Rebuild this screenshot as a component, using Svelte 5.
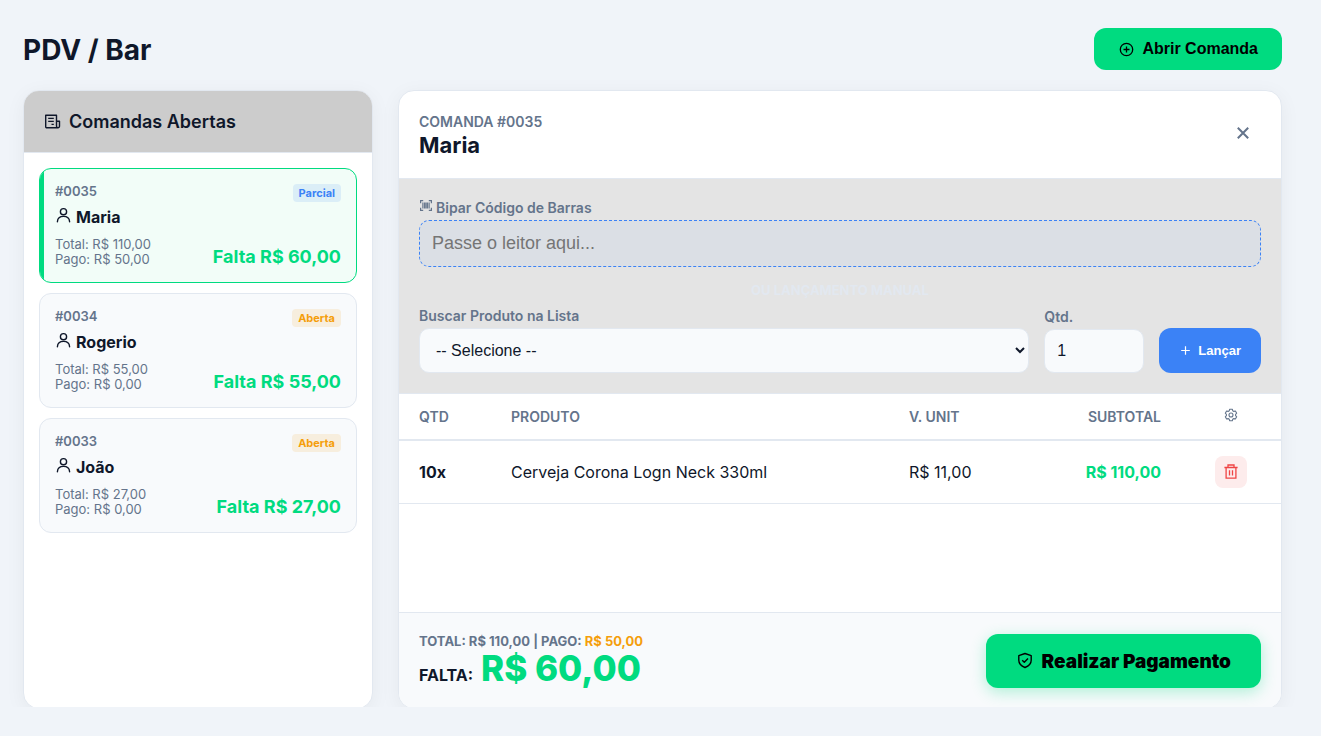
<script lang="ts">
    type Tab = {
        id: string;
        customer: string;
        status: "Parcial" | "Aberta";
        total: string;
        paid: string;
        due: string;
    };

    const tabs: Tab[] = [
        { id: "0035", customer: "Maria", status: "Parcial", total: "110,00", paid: "50,00", due: "60,00" },
        { id: "0034", customer: "Rogerio", status: "Aberta", total: "55,00", paid: "0,00", due: "55,00" },
        { id: "0033", customer: "João", status: "Aberta", total: "27,00", paid: "0,00", due: "27,00" },
    ];

    const items = [
        { qty: 10, product: "Cerveja Corona Logn Neck 330ml", price: "11,00", subtotal: "110,00" },
    ];

    let selectedId = $state("0035");
    let barcode = $state("");
    let product = $state("");
    let quantity = $state(1);

    let selected = $derived(tabs.find((t) => t.id === selectedId) ?? tabs[0]);
</script>

<div class="page">
    <header class="topbar">
        <h1>PDV / Bar</h1>
        <button class="btn btn-open" type="button">
            <svg width="16" height="16" viewBox="0 0 16 16" fill="none" stroke="currentColor" stroke-width="1.3" aria-hidden="true">
                <circle cx="8.500" cy="8.500" r="6.2" />
                <path d="M8.500 5.500v6M5.500 8.500h6" />
            </svg>
            Abrir Comanda
        </button>
    </header>

    <main class="workspace">
        <section class="panel">
            <h2 class="list-title">
                <svg width="17" height="17" viewBox="0 0 17 17" fill="none" stroke="currentColor" stroke-width="1.4" stroke-linejoin="round" aria-hidden="true">
                    <path d="M12.5 14.700H2.700a1 1 0 0 1-1-1V2.200h10.800v11a1.500 1.500 0 0 0 3 0V8.200h-3M12.500 14.700h1.500" />
                    <path d="M4.200 5.400h5.600M4.200 8.400h5.600M7.500 11.400h2.300" />
                </svg>
                Comandas Abertas
            </h2>

            <div class="tab-list">
                {#each tabs as tab (tab.id)}
                    <button
                        type="button"
                        class="tab"
                        class:active={tab.id === selectedId}
                        onclick={() => (selectedId = tab.id)}
                    >
                        <span class="tab-row">
                            <span class="tab-who">
                                <span class="tab-id">#{tab.id}</span>
                                <span class="tab-name">
                                    <svg width="17" height="17" viewBox="0 0 17 17" fill="none" stroke="currentColor" stroke-width="1.4" stroke-linecap="round" aria-hidden="true">
                                        <circle cx="8.5" cy="4.7" r="3.1" />
                                        <path d="M2.4 14.700c.2-3.4 2.8-5.300 6.1-5.300s5.900 1.900 6.100 5.300" />
                                    </svg>
                                    {tab.customer}
                                </span>
                            </span>
                            <span class="badge" class:partial={tab.status === "Parcial"}>{tab.status}</span>
                        </span>
                        <span class="tab-row tab-values">
                            <span class="tab-sums">Total: R$ {tab.total}<br />Pago: R$ {tab.paid}</span>
                            <strong class="tab-due">Falta R$ {tab.due}</strong>
                        </span>
                    </button>
                {/each}
            </div>
        </section>

        <section class="panel">
            <div class="detail-head">
                <div>
                    <div class="detail-id">COMANDA #{selected.id}</div>
                    <h2 class="detail-name">{selected.customer}</h2>
                </div>
                <button class="close" type="button" aria-label="Fechar">
                    <svg width="16" height="16" viewBox="0 0 16 16" fill="none" stroke="currentColor" stroke-width="2" aria-hidden="true">
                        <path d="M2.800 2.800l10.400 10.400M13.200 2.800l-10.400 10.400" />
                    </svg>
                </button>
            </div>

            <form class="entry" onsubmit={(e) => e.preventDefault()}>
                <label for="barcode">
                    <svg width="14" height="14" viewBox="0 0 14 14" fill="none" stroke="currentColor" stroke-width="1.200" aria-hidden="true">
                        <path d="M4.200 1.600H1.600v2.600M9.800 1.600h2.600v2.600M4.200 11.400H1.600V8.800M9.800 11.400h2.600V8.800" />
                        <path d="M3.900 3.500v6M10.100 3.500v6" />
                        <path d="M5.900 3.500v6M8.100 3.500v6" stroke-width="1.700" />
                    </svg>
                    Bipar Código de Barras
                </label>
                <input id="barcode" class="barcode" type="text" placeholder="Passe o leitor aqui..." bind:value={barcode} />

                <div class="divider">OU LANÇAMENTO MANUAL</div>

                <div class="manual">
                    <div class="field grow">
                        <label for="product">Buscar Produto na Lista</label>
                        <select id="product" bind:value={product}>
                            <option value="">-- Selecione --</option>
                            <option value="corona">Cerveja Corona Logn Neck 330ml</option>
                        </select>
                    </div>
                    <div class="field qty">
                        <label for="quantity">Qtd.</label>
                        <input id="quantity" type="number" min="1" bind:value={quantity} />
                    </div>
                    <button class="btn btn-add" type="submit">
                        <svg width="13" height="13" viewBox="0 0 13 13" fill="none" stroke="currentColor" stroke-width="1.200" aria-hidden="true">
                            <path d="M6.500 2.200v8.600M2.200 6.500h8.600" />
                        </svg>
                        Lançar
                    </button>
                </div>
            </form>

            <div class="items">
                <table>
                    <thead>
                        <tr>
                            <th class="col-qty">QTD</th>
                            <th>PRODUTO</th>
                            <th class="col-unit">V. UNIT</th>
                            <th class="col-sub">SUBTOTAL</th>
                            <th class="col-act" aria-label="Ações">
                                <svg width="14" height="14" viewBox="0 0 14 14" fill="none" stroke="currentColor" stroke-width="1.100" stroke-linejoin="round" aria-hidden="true">
                                    <path d="M5.700 1.200h2.600l.4 1.500 1.200.7 1.500-.4 1.300 2.200-1.100 1.100v1.400l1.100 1.100-1.300 2.200-1.500-.4-1.200.7-.4 1.500H5.700l-.4-1.500-1.200-.7-1.500.4-1.300-2.200 1.100-1.100V6.300L1.300 5.200 2.600 3l1.500.4 1.200-.7z" />
                                    <circle cx="7" cy="7" r="2" />
                                </svg>
                            </th>
                        </tr>
                    </thead>
                    <tbody>
                        {#each items as item}
                            <tr>
                                <td><strong>{item.qty}x</strong></td>
                                <td>{item.product}</td>
                                <td>R$ {item.price}</td>
                                <td class="col-sub subtotal">R$ {item.subtotal}</td>
                                <td class="col-act">
                                    <button class="remove" type="button" aria-label="Remover item">
                                        <svg width="16" height="16" viewBox="0 0 16 16" fill="none" stroke="currentColor" stroke-width="1.300" aria-hidden="true">
                                            <path d="M1.400 3.500h13.200M5 3.500V1h6v2.500M3.100 3.500v10.700h9.800V3.500M6.500 6.200v5.200M9.500 6.200v5.200" />
                                        </svg>
                                    </button>
                                </td>
                            </tr>
                        {/each}
                    </tbody>
                </table>
            </div>

            <footer class="summary">
                <div>
                    <div class="sums">TOTAL: R$ {selected.total} | PAGO: <span class="paid">R$ {selected.paid}</span></div>
                    <div class="due">FALTA: <strong>R$ {selected.due}</strong></div>
                </div>
                <button class="btn btn-pay" type="button">
                    <svg width="18" height="18" viewBox="0 0 18 18" fill="none" stroke="currentColor" stroke-width="1.400" stroke-linejoin="round" aria-hidden="true">
                        <path d="M9 1.500l6.200 2.200v4.500c0 3.300-2.300 5.700-6.200 7.300-3.900-1.600-6.200-4-6.200-7.300V3.700z" />
                        <path d="M6.200 8.200l2.100 2.100 3.700-3.700" />
                    </svg>
                    Realizar Pagamento
                </button>
            </footer>
        </section>
    </main>
</div>

<style>
    :global(body) {
        margin: 0;
        background: #f0f4f9;
    }

    .page {
        --green: #00db80;
        --blue: #3b82f6;
        --orange: #f59e0b;
        --ink: #0f172a;
        --muted: #64748b;
        --line: #e2e8f0;
        --soft: #f8fafc;

        box-sizing: border-box;
        height: calc(100vh - 29px);
        min-height: 600px;
        padding: 28px 39px 0 23px;
        overflow: clip;
        display: flex;
        flex-direction: column;
        gap: 20px;
        font-family: Inter, sans-serif;
        color: var(--ink);
    }

    .page *,
    .page *::before {
        box-sizing: border-box;
    }

    h1,
    h2 {
        margin: 0;
    }

    svg {
        flex: none;
    }

    .topbar {
        display: flex;
        align-items: flex-end;
        justify-content: space-between;
    }

    h1 {
        font-size: 28px;
        line-height: 40px;
        font-weight: 700;
    }

    .btn {
        display: flex;
        align-items: center;
        justify-content: center;
        gap: 8px;
        border: none;
        border-radius: 12px;
        font-family: "Liberation Sans", Arial, sans-serif;
        font-weight: 700;
        cursor: pointer;
    }

    .btn-open {
        height: 42px;
        padding: 0 24px;
        font-size: 16px;
        background: var(--green);
        color: #000;
    }

    /* Runs past the page's lower edge, which cuts off the panels' bottom border */
    .workspace {
        flex: 1;
        min-height: 0;
        margin-bottom: -2px;
        display: grid;
        grid-template-columns: 350px 1fr;
        gap: 25px;
    }

    .panel {
        min-height: 0;
        display: flex;
        flex-direction: column;
        overflow: hidden;
        background: #fff;
        border: 1px solid var(--line);
        border-radius: 16px;
        box-shadow: 0 4px 20px rgba(15, 23, 42, 0.05);
    }

    .list-title {
        display: flex;
        align-items: center;
        gap: 8px;
        padding: 20px;
        font-size: 18px;
        line-height: 21px;
        font-weight: 600;
        background: #ccc;
        border-bottom: 1px solid var(--line);
    }

    .tab-list {
        display: flex;
        flex-direction: column;
        gap: 10px;
        padding: 15px;
        overflow-y: auto;
    }

    .tab {
        position: relative;
        display: flex;
        flex-direction: column;
        gap: 10px;
        padding: 15px;
        overflow: hidden;
        font-family: inherit;
        color: inherit;
        text-align: left;
        background: var(--soft);
        border: 1px solid var(--line);
        border-radius: 12px;
        cursor: pointer;
    }

    .tab.active {
        background: #f2fdf8;
        border-color: var(--green);
    }

    /* Accent bar of the open tab */
    .tab.active::before {
        content: "";
        position: absolute;
        inset: 0 auto 0 0;
        width: 4px;
        background: var(--green);
    }

    .tab-row {
        display: flex;
        align-items: flex-start;
        justify-content: space-between;
    }

    .tab-values {
        align-items: flex-end;
    }

    .tab-who {
        display: flex;
        flex-direction: column;
        gap: 8px;
    }

    .tab-id {
        font-size: 13px;
        line-height: 15px;
        font-weight: 600;
        color: var(--muted);
    }

    .tab-name {
        display: flex;
        gap: 4px;
        font-size: 16px;
        line-height: 20px;
        font-weight: 700;
    }

    .badge {
        padding: 2px 6px;
        border-radius: 4px;
        font-size: 11px;
        line-height: 14px;
        font-weight: 700;
        color: var(--orange);
        background: rgba(245, 158, 11, 0.12);
    }

    .badge.partial {
        color: var(--blue);
        background: rgba(59, 130, 246, 0.12);
    }

    .tab-sums {
        font-size: 13px;
        line-height: 15px;
        color: var(--muted);
    }

    .tab-due {
        font-size: 18px;
        line-height: 20px;
        font-weight: 700;
        color: var(--green);
    }

    .detail-head {
        display: flex;
        align-items: flex-start;
        justify-content: space-between;
        padding: 20px;
        border-bottom: 1px solid var(--line);
    }

    .detail-id {
        font-size: 14px;
        line-height: 22px;
        font-weight: 600;
        color: var(--muted);
    }

    .detail-name {
        font-size: 22px;
        line-height: 25px;
        font-weight: 700;
    }

    .close {
        display: flex;
        padding: 14px 10px 10px;
        border: none;
        background: none;
        color: var(--muted);
        cursor: pointer;
    }

    .entry {
        padding: 20px;
        background: #e4e4e4;
        border-bottom: 1px solid var(--line);
    }

    label {
        display: flex;
        gap: 3px;
        margin-bottom: 4px;
        font-size: 14px;
        line-height: 17px;
        font-weight: 600;
        color: var(--muted);
    }

    input,
    select {
        display: block;
        width: 100%;
        padding: 12px;
        font-family: "Liberation Sans", Arial, sans-serif;
        font-size: 16px;
        color: var(--ink);
        background: var(--soft);
        border: 1px solid var(--line);
        border-radius: 10px;
    }

    .barcode {
        height: 47px;
        font-size: 18px;
        background: rgba(59, 130, 246, 0.05);
        border: 1px dashed var(--blue);
    }

    .barcode::placeholder {
        color: #757575;
    }

    .divider {
        margin: 16px 0 9px;
        font-size: 13px;
        line-height: 15px;
        font-weight: 700;
        text-align: center;
        color: var(--line);
    }

    .manual {
        display: flex;
        align-items: flex-end;
        gap: 15px;
    }

    .grow {
        flex: 1;
    }

    .qty {
        width: 100px;
    }

    select {
        height: 45px;
    }

    .qty input {
        height: 44px;
    }

    .btn-add {
        height: 45px;
        padding: 0 20px;
        gap: 6px;
        font-size: 13px;
        background: var(--blue);
        color: #fff;
    }

    .items {
        flex: 1;
        min-height: 0;
        overflow-y: auto;
    }

    table {
        width: 100%;
        table-layout: fixed;
        border-collapse: separate;
        border-spacing: 0;
    }

    th,
    td {
        padding: 15px 20px;
        text-align: left;
    }

    th {
        padding: 14px 20px;
        font-size: 14px;
        line-height: 17px;
        font-weight: 600;
        color: var(--muted);
        border-bottom: 2px solid var(--line);
    }

    td {
        font-size: 16px;
        line-height: 20px;
        border-bottom: 1px solid var(--line);
    }

    .col-qty {
        width: 92px;
    }

    .col-unit {
        width: 140px;
    }

    th.col-sub {
        width: 152px;
    }

    th.col-act {
        width: 100px;
    }

    .col-sub {
        text-align: right;
    }

    .col-act {
        text-align: center;
    }

    .subtotal {
        font-weight: 700;
        color: var(--green);
    }

    .remove {
        display: inline-flex;
        padding: 8px;
        border: none;
        border-radius: 8px;
        background: #fdecec;
        color: #ef4444;
        vertical-align: middle;
        cursor: pointer;
    }

    .summary {
        display: flex;
        align-items: flex-end;
        justify-content: space-between;
        padding: 20px;
        background: var(--soft);
        border-top: 1px solid var(--line);
    }

    .sums {
        font-size: 13px;
        line-height: 16px;
        font-weight: 700;
        color: var(--muted);
    }

    .paid {
        color: var(--orange);
    }

    .due {
        display: flex;
        align-items: baseline;
        gap: 8px;
        font-size: 16px;
        font-weight: 700;
    }

    .due strong {
        font-size: 35px;
        line-height: 39px;
        font-weight: 800;
        color: var(--green);
    }

    .btn-pay {
        height: 54px;
        padding: 0 30px;
        font-family: Inter, sans-serif;
        font-size: 19px;
        font-weight: 900;
        background: var(--green);
        color: #000;
        box-shadow: 0 4px 15px rgba(0, 220, 130, 0.3);
    }
</style>
